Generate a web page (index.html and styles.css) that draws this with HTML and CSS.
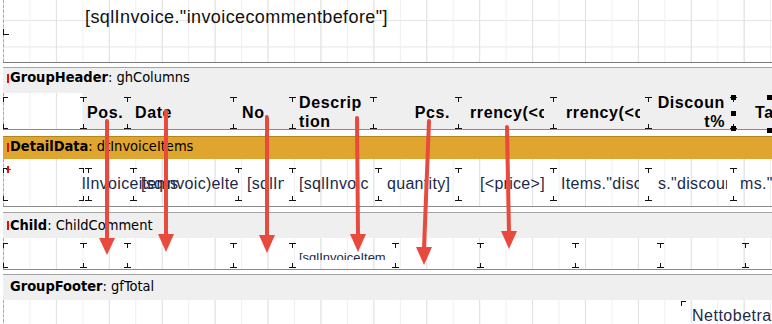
FILE: index.html
```html
<!DOCTYPE html>
<html lang="de">
<head>
    <meta charset="UTF-8">
    <meta name="viewport" content="width=device-width, initial-scale=1.0">
    <title>Report Designer - Rechnung</title>
    <link rel="stylesheet" href="styles.css">
</head>
<body>
    <div class="designer">
        <div class="page">
            <!-- oberer Band-Rest mit Kommentar -->
            <section class="band">
                <div class="band-body body-top">
                    <span class="corner-bl"></span>
                    <div class="top-field">[sqlInvoice."invoicecommentbefore"]</div>
                </div>
            </section>

            <section class="band">
                <div class="band-title title-header marked"><b>GroupHeader</b>: ghColumns</div>
                <div class="band-body body-header">
                    <div class="row row-header">
                        <div class="cell h-empty"></div>
                        <div class="cell h-pos"><span class="txt">Pos.</span></div>
                        <div class="cell h-date"><span class="txt">Date</span></div>
                        <div class="cell h-no"><span class="txt">No.</span></div>
                        <div class="cell h-desc"><span class="txt">Descrip<br>tion</span></div>
                        <div class="cell h-pcs"><span class="txt">Pcs.</span></div>
                        <div class="cell h-price"><span class="txt clip">rrency(&lt;cur</span></div>
                        <div class="cell h-total"><span class="txt clip">rrency(&lt;cur</span></div>
                        <div class="cell h-disc"><span class="txt">Discoun<br>t%</span></div>
                        <div class="cell h-tax selected">
                            <span class="txt">Tax</span>
                            <span class="sel sel-tl"></span>
                            <span class="sel sel-ml"></span>
                            <span class="sel sel-bl"></span>
                            <span class="sel sel-tr"></span>
                            <span class="sel sel-br"></span>
                        </div>
                    </div>
                </div>
            </section>

            <section class="band">
                <div class="band-title title-data marked"><b>DetailData</b>: dtInvoiceItems</div>
                <div class="band-body body-detail">
                    <span class="red-cross"></span>
                    <div class="row row-detail">
                        <div class="cell d-lead"></div>
                        <div class="cell d-gap"></div>
                        <div class="cell d-pos"><span class="val">lInvoiceitems</span></div>
                        <div class="cell d-date"><span class="val">[sqlnvoic)elte</span></div>
                        <div class="cell d-no"><span class="val clip">[sqlInvoice</span></div>
                        <div class="cell d-desc"><span class="val clip">[sqlInvoiceItems</span></div>
                        <div class="cell d-qty"><span class="val">quantity]</span></div>
                        <div class="cell d-price"><span class="val">[&lt;price&gt;]</span></div>
                        <div class="cell d-total"><span class="val clip">Items."discount"]</span></div>
                        <div class="cell d-disc"><span class="val clip">s."discount"]</span></div>
                        <div class="cell d-tax"><span class="val">ms."discount"]</span></div>
                    </div>
                </div>
            </section>

            <section class="band">
                <div class="band-title title-child marked"><b>Child</b>: ChildComment</div>
                <div class="band-body body-child">
                    <div class="row row-child">
                        <div class="cell c-lead"></div>
                        <div class="cell c-pos"></div>
                        <div class="cell c-date"></div>
                        <div class="cell c-no"></div>
                        <div class="cell c-desc"><span class="child-text">[sqlInvoiceItem</span></div>
                        <div class="cell c-qty"></div>
                        <div class="cell c-price"></div>
                        <div class="cell c-total"></div>
                        <div class="cell c-disc"></div>
                        <div class="cell c-tax"></div>
                    </div>
                </div>
            </section>

            <section class="band">
                <div class="band-title title-footer"><b>GroupFooter</b>: gfTotal</div>
                <div class="band-body body-footer">
                    <div class="row row-footer">
                        <div class="cell f-net"><span class="val">Nettobetrag</span></div>
                    </div>
                </div>
            </section>
        </div>

        <svg class="arrows" viewBox="0 0 772 324" width="772" height="324">
            <g stroke="#e84a3e" stroke-width="4" stroke-linecap="round">
                <line x1="107" y1="121" x2="107" y2="240"/>
                <line x1="166" y1="111" x2="166" y2="236"/>
                <line x1="267" y1="118" x2="267" y2="237"/>
                <line x1="357" y1="118" x2="358" y2="236"/>
                <line x1="429" y1="121" x2="424" y2="249"/>
                <line x1="507" y1="127" x2="509" y2="233"/>
            </g>
            <g fill="#e84a3e">
                <polygon points="99,238 115,238 107,255"/>
                <polygon points="158,234 174,234 166,252"/>
                <polygon points="259,235 275,235 267,253"/>
                <polygon points="350,234 366,234 358,252"/>
                <polygon points="416,247 432,247 424,265"/>
                <polygon points="501,231 517,231 509,249"/>
            </g>
        </svg>
    </div>
</body>
</html>
```

FILE: styles.css
```css
:root {
    --grid-strong: #e1e1e1;
    --grid-light: #efefef;
    --band-gray: #efefef;
    --band-orange: #e0a52e;
    --tick: #111111;
    --field-text: #1c2a48;
}
body {
    margin: 0;
    background-color: #ffffff;
}
.designer {
    position: relative;
    width: 772px;
    height: 324px;
    overflow: hidden;
    font-family: "Liberation Sans", Arial, sans-serif;
    color: #111111;
}
.page {
    margin-left: 3px;
}

/* Bandköpfe */
.band-title {
    position: relative;
    border-top: 1px solid #a3a3a3;
    background-color: var(--band-gray);
    box-sizing: border-box;
    height: 26px;
    padding-left: 7px;
    font-family: "DejaVu Sans Condensed", "Liberation Sans", sans-serif;
    font-size: 14.5px;
    line-height: 17px;
    color: #000000;
    white-space: nowrap;
}
.band-title b {
    font-weight: bold;
}
.band-title.marked::before {
    content: '';
    position: absolute;
    left: 4px;
    top: 6px;
    width: 2px;
    height: 9px;
    background-color: #e01010;
}
.title-header { padding-top: 1px; }
.title-data {
    height: 23px;
    padding-top: 1px;
    border-top-color: #b48420;
    background-color: var(--band-orange);
}
.title-child { padding-top: 4px; }
.title-child.marked::before { top: 8px; }
.title-footer { padding-top: 3px; }

/* Bandinhalt mit Raster */
.band-body {
    position: relative;
    background-color: #ffffff;
    background-image:
        linear-gradient(to right, var(--grid-strong) 1px, transparent 1px),
        linear-gradient(to right, var(--grid-light) 1px, transparent 1px);
    background-size: 52.92px 100%, 26.46px 100%;
    background-position: 0 0, 0 0;
    border-bottom: 1px solid #8a8a8a;
}
.band-body::before {
    content: '';
    position: absolute;
    left: 0;
    top: 0;
    bottom: 0;
    border-left: 1px dashed #a8a8a8;
}
.body-top {
    height: 62px;
    margin-bottom: 4px;
    border-bottom-color: #7a7a7a;
    background-image:
        linear-gradient(to right, var(--grid-strong) 1px, transparent 1px),
        linear-gradient(to right, var(--grid-light) 1px, transparent 1px),
        linear-gradient(to bottom, #e6e6e6 1px, transparent 1px);
    background-size: 52.92px 100%, 26.46px 100%, 100% 26.46px;
    background-position: 0 0, 0 0, 0 20px;
}
.body-header {
    height: 36px;
    margin-bottom: 6px;
}
.body-detail {
    height: 38px;
    padding-top: 9px;
    margin-bottom: 5px;
}
.body-child {
    height: 26px;
    padding-top: 5px;
    margin-bottom: 4px;
}
.body-footer {
    height: 40px;
    padding-top: 1px;
    border-bottom: none;
}

.top-field {
    padding: 7px 0 0 82px;
    font-size: 18px;
    letter-spacing: 0.4px;
    color: #111111;
    white-space: nowrap;
}
.corner-bl {
    position: absolute;
    left: 0;
    top: 29px;
    width: 5px;
    height: 5px;
    border-left: 1px solid var(--tick);
    border-bottom: 1px solid var(--tick);
}

/* Zellenreihen */
.row {
    display: flex;
}
.cell {
    position: relative;
    flex: none;
    box-sizing: border-box;
    display: flex;
    align-items: center;
}
.cell::before,
.cell::after {
    content: '';
    position: absolute;
    left: -3px;
    width: 7px;
    height: 5px;
    z-index: 2;
    pointer-events: none;
}
.cell::before {
    top: var(--tick-top, 0);
    background:
        linear-gradient(var(--tick), var(--tick)) 0 0 / 7px 1px no-repeat,
        linear-gradient(var(--tick), var(--tick)) 3px 0 / 1px 5px no-repeat;
}
.cell::after {
    bottom: var(--tick-bottom, 0);
    background:
        linear-gradient(var(--tick), var(--tick)) 0 100% / 7px 1px no-repeat,
        linear-gradient(var(--tick), var(--tick)) 3px 0 / 1px 5px no-repeat;
}
.cell:first-child::before,
.cell:first-child::after {
    left: 0;
    width: 5px;
}
.cell:first-child::before {
    background:
        linear-gradient(var(--tick), var(--tick)) 0 0 / 5px 1px no-repeat,
        linear-gradient(var(--tick), var(--tick)) 0 0 / 1px 5px no-repeat;
}
.cell:first-child::after {
    background:
        linear-gradient(var(--tick), var(--tick)) 0 100% / 5px 1px no-repeat,
        linear-gradient(var(--tick), var(--tick)) 0 0 / 1px 5px no-repeat;
}

/* Spaltenköpfe */
.row-header .cell {
    height: 36px;
    padding-top: 2px;
    background-color: var(--band-gray);
    font-weight: bold;
    font-size: 16px;
    line-height: 19px;
    letter-spacing: 0.6px;
    color: #000000;
    white-space: nowrap;
    --tick-top: 4px;
    --tick-bottom: 0px;
}
.row-header .h-empty {
    background-color: transparent;
}
.txt.clip {
    display: block;
    overflow: hidden;
}
.h-empty { width: 80px; }
.h-pos { width: 44px; padding-left: 4px; }
.h-date { width: 106px; padding-left: 8px; }
.h-no { width: 59px; padding-left: 9px; }
.h-desc { width: 81px; padding-left: 7px; }
.h-pcs { width: 85px; justify-content: flex-end; padding-right: 8px; }
.h-price { width: 95px; padding-left: 12px; }
.h-price .clip { width: 74px; }
.h-total { width: 95px; padding-left: 13px; }
.h-total .clip { width: 74px; }
.h-disc { width: 85px; justify-content: flex-end; padding-right: 8px; text-align: right; }
.h-tax { width: 80px; padding-left: 22px; }

.sel {
    position: absolute;
    width: 5px;
    height: 5px;
    background-color: #000000;
    z-index: 3;
}
.sel-tl { left: -2px; top: 2px; }
.sel-ml { left: -2px; top: 18px; }
.sel-bl { left: -2px; top: 33px; }
.sel-tr { left: 34px; top: 2px; }
.sel-br { left: 34px; top: 35px; }

/* Detailzeile */
.row-detail .cell,
.row-footer .cell {
    font-size: 16px;
    letter-spacing: 0.3px;
    color: var(--field-text);
    white-space: nowrap;
}
.row-detail .cell {
    height: 33px;
    padding-bottom: 2px;
}
.val.clip {
    display: block;
    overflow: hidden;
}
.d-lead { width: 80px; }
.d-gap { width: 5px; }
.d-gap::before,
.d-gap::after {
    left: -4px;
    width: 5px;
}
.d-gap::before {
    background:
        linear-gradient(var(--tick), var(--tick)) 0 0 / 5px 1px no-repeat,
        linear-gradient(var(--tick), var(--tick)) 4px 0 / 1px 5px no-repeat;
}
.d-gap::after {
    background:
        linear-gradient(var(--tick), var(--tick)) 0 100% / 5px 1px no-repeat,
        linear-gradient(var(--tick), var(--tick)) 4px 0 / 1px 5px no-repeat;
}
.d-pos { width: 45px; }
.d-pos .val { margin-left: -6px; }
.d-date { width: 105px; padding-left: 8px; }
.d-no { width: 54px; padding-left: 9px; }
.d-no .clip { width: 37px; }
.d-desc { width: 86px; padding-left: 7px; }
.d-desc .clip { width: 70px; }
.d-qty { width: 80px; padding-left: 9px; }
.d-price { width: 95px; padding-left: 22px; }
.d-total { width: 95px; padding-left: 8px; }
.d-total .clip { width: 78px; }
.d-disc { width: 85px; padding-left: 10px; }
.d-disc .clip { width: 69px; }
.d-tax { width: 80px; padding-left: 7px; }

.red-cross {
    position: absolute;
    left: 3px;
    top: 7px;
    width: 5px;
    height: 7px;
    background:
        linear-gradient(#e01010, #e01010) 1px 0 / 2px 7px no-repeat,
        linear-gradient(#e01010, #e01010) 0 3px / 5px 1px no-repeat;
    z-index: 3;
}

/* Child-Band */
.row-child .cell {
    height: 25px;
    align-items: flex-start;
}
.c-lead { width: 80px; }
.c-pos { width: 44px; }
.c-date { width: 106px; }
.c-no { width: 59px; }
.c-desc { width: 103px; }
.c-qty { width: 85px; }
.c-price { width: 95px; }
.c-total { width: 85px; }
.c-disc { width: 85px; }
.c-tax { width: 80px; }
.child-text {
    display: block;
    margin: 7px 0 0 7px;
    height: 10px;
    overflow: hidden;
    font-size: 13px;
    line-height: 15px;
    color: var(--field-text);
    white-space: nowrap;
}

/* Gruppenfuß */
.row-footer {
    padding-left: 678px;
}
.row-footer .cell {
    height: 30px;
    align-items: flex-start;
    padding-left: 11px;
    letter-spacing: 0.5px;
}
.row-footer .cell::after {
    display: none;
}
.f-net .val {
    margin-top: 6px;
}

.arrows {
    position: absolute;
    left: 0;
    top: 0;
    z-index: 5;
}
```
